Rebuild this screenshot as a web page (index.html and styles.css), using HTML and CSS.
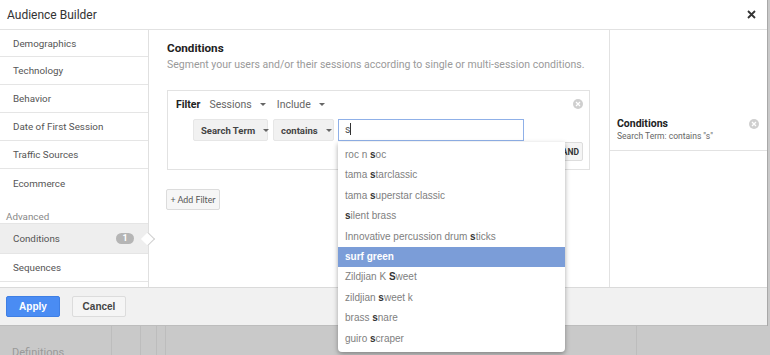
FILE: index.html
```html
<!DOCTYPE html>
<html>
<head>
<meta charset="utf-8">
<title>Audience Builder</title>
<link rel="stylesheet" href="styles.css">
</head>
<body>
<div class="modal">
  <div class="header">
    <span class="title">Audience Builder</span>
    <svg class="close" width="9" height="9" viewBox="0 0 9 9"><path d="M1 1L8 8M8 1L1 8" stroke="#333" stroke-width="1.8"/></svg>
  </div>
  <div class="body">
    <nav class="sidebar">
      <div class="item first">Demographics</div>
      <div class="item">Technology</div>
      <div class="item">Behavior</div>
      <div class="item">Date of First Session</div>
      <div class="item">Traffic Sources</div>
      <div class="item plain">Ecommerce</div>
      <div class="section">Advanced</div>
      <div class="item active">Conditions <span class="badge">1</span></div>
      <div class="item">Sequences</div>
    </nav>
    <main class="main">
      <h2 class="heading">Conditions</h2>
      <p class="sub">Segment your users and/or their sessions according to single or multi-session conditions.</p>
      <div class="filter">
        <div class="filter-top">
          <span class="filter-label">Filter</span>
          <span class="drop d-sessions">Sessions <span class="caret"></span></span>
          <span class="drop">Include <span class="caret"></span></span>
          <span class="spacer"></span>
          <span class="remove"><svg width="6" height="6" viewBox="0 0 6 6"><path d="M1 1L5 5M5 1L1 5" stroke="#fff" stroke-width="1.3"/></svg></span>
        </div>
        <div class="filter-row">
          <span class="sel w-term">Search Term <span class="caret"></span></span>
          <span class="sel w-contains">contains <span class="caret"></span></span>
          <div class="input-wrap">
            <div class="input">s<span class="cursor"></span></div>
            <ul class="dropdown">
              <li>roc n <b>s</b>oc</li>
              <li>tama <b>s</b>tarclassic</li>
              <li>tama <b>s</b>uperstar classic</li>
              <li><b>s</b>ilent brass</li>
              <li>Innovative percussion drum <b>s</b>ticks</li>
              <li class="hl"><b>s</b>urf green</li>
              <li>Zildjian K <b>S</b>weet</li>
              <li>zildjian <b>s</b>weet k</li>
              <li>brass <b>s</b>nare</li>
              <li>guiro <b>s</b>craper</li>
            </ul>
          </div>
        </div>
        <div class="and-row"><span class="and">AND</span></div>
      </div>
      <span class="add">+ Add Filter</span>
    </main>
    <aside class="summary">
      <div class="sum-item">
        <div class="sum-text">
          <div class="sum-title">Conditions</div>
          <div class="sum-desc">Search Term: contains "s"</div>
        </div>
        <span class="remove"><svg width="6" height="6" viewBox="0 0 6 6"><path d="M1 1L5 5M5 1L1 5" stroke="#fff" stroke-width="1.3"/></svg></span>
      </div>
    </aside>
  </div>
  <div class="footer">
    <span class="btn apply">Apply</span>
    <span class="btn cancel">Cancel</span>
  </div>
</div>
<div class="behind">
  <div class="b-tab"><span class="b-label">Definitions</span></div>
  <div class="b-col c1"></div>
  <div class="b-col c2"></div>
  <div class="b-col c3"></div>
  <div class="b-col c4"></div>
</div>
</body>
</html>
```
FILE: styles.css
```css
* { box-sizing: border-box; }
body {
  margin: 0;
  width: 770px;
  height: 355px;
  overflow: hidden;
  background: #c9c9c9;
  font-family: Roboto, "Liberation Sans", sans-serif;
}
.modal {
  width: 768px;
  background: #fff;
  border-right: 1px solid #a8a8a8;
  position: relative;
}
.header {
  height: 30px;
  border-bottom: 1px solid #e2e2e2;
  display: flex;
  align-items: center;
  justify-content: space-between;
  padding: 0 11px 0 7px;
}
.title { font-size: 12px; color: #333; }
.body { display: flex; height: 257px; }

.sidebar {
  width: 149px;
  border-right: 1px solid #e0e0e0;
  display: flex;
  flex-direction: column;
}
.item {
  height: 28px;
  flex: none;
  border-bottom: 1px solid #e5e5e5;
  padding-left: 13px;
  padding-right: 14px;
  display: flex;
  align-items: center;
  font-size: 9.8px;
  color: #555;
  position: relative;
}
.item.first { height: 27px; }
.item.plain { border-bottom: none; }
.section {
  height: 27px;
  flex: none;
  padding-left: 6px;
  display: flex;
  align-items: flex-end;
  padding-bottom: 1px;
  font-size: 9.8px;
  color: #888;
  border-bottom: 1px solid #e5e5e5;
}
.item.active {
  background: #eeeeee;
  justify-content: space-between;
  height: 30px;
}
.item.active::after {
  content: "";
  position: absolute;
  right: -5px;
  top: 10px;
  width: 9px;
  height: 9px;
  background: #fff;
  border-top: 1px solid #d0d0d0;
  border-right: 1px solid #d0d0d0;
  transform: rotate(45deg);
}
.badge {
  background: #b5b5b5;
  color: #fff;
  font-size: 9px;
  font-weight: bold;
  border-radius: 6px;
  width: 18px;
  height: 11px;
  line-height: 11px;
  text-align: center;
}

.main {
  width: 460px;
  padding: 11px 19px 0 18px;
}
.heading {
  margin: 0;
  font-size: 11.7px;
  line-height: 15px;
  font-weight: bold;
  color: #222;
}
.sub {
  margin: 1px 0 0;
  font-size: 10.5px;
  line-height: 16px;
  color: #9a9a9a;
  white-space: nowrap;
}
.filter {
  margin-top: 17px;
  border: 1px solid #e2e2e2;
  height: 80px;
  padding: 5px 6px 0 8px;
}
.filter-top {
  display: flex;
  align-items: center;
  height: 16px;
  font-size: 10.5px;
}
.filter-label { font-weight: bold; color: #222; margin-right: 9px; }
.drop { color: #666; display: flex; align-items: center; }
.d-sessions { margin-right: 11px; }
.caret {
  display: inline-block;
  width: 0;
  height: 0;
  border-left: 3px solid transparent;
  border-right: 3px solid transparent;
  border-top: 3px solid #666;
  margin-left: 8px;
}
.spacer { flex: 1; }
.remove {
  width: 10px;
  height: 10px;
  border-radius: 50%;
  background: #cfcfcf;
  display: flex;
  align-items: center;
  justify-content: center;
}
.filter-row {
  display: flex;
  margin: 7px 0 0 17px;
  height: 22px;
}
.sel {
  background: #f1f1f1;
  border: 1px solid #e6e6e6;
  border-radius: 2px;
  font-size: 9.5px;
  font-weight: bold;
  color: #444;
  white-space: nowrap;
  display: flex;
  align-items: center;
  justify-content: space-between;
  padding: 0 8px 0 7px;
  margin-right: 5px;
}
.w-term { width: 75px; }
.w-contains { width: 61px; margin-right: 4px; }
.input-wrap { position: relative; width: 186px; }
.input {
  height: 22px;
  border: 1px solid #8fb0e8;
  font-size: 10.5px;
  color: #555;
  padding: 3px 6px;
  line-height: 14px;
}
.cursor {
  display: inline-block;
  width: 1px;
  height: 12px;
  background: #333;
  vertical-align: -2px;
}
.dropdown {
  position: absolute;
  z-index: 10;
  left: 0;
  top: 23px;
  width: 227px;
  margin: 0;
  padding: 3px 0 3px;
  list-style: none;
  background: #fff;
  border-radius: 0 0 4px 4px;
  box-shadow: 0 2px 5px rgba(0,0,0,0.35);
  font-family: "Liberation Sans", Arial, sans-serif;
  font-size: 10px;
  color: #808080;
}
.dropdown li {
  height: 20.4px;
  line-height: 20.4px;
  padding-left: 7px;
}
.dropdown b { color: #333; }
.dropdown li.hl { background: #7b9dd8; color: #fff; font-weight: bold; }
.dropdown li.hl b { color: #fff; }
.and-row { display: flex; justify-content: flex-end; margin-top: 1px; }
.and {
  height: 19px;
  padding: 0 3px 0 8px;
  border: 1px solid #ddd;
  border-radius: 2px;
  background: #f5f5f5;
  font-size: 8.5px;
  font-weight: bold;
  color: #333;
  display: flex;
  align-items: center;
}
.add {
  display: inline-flex;
  align-items: center;
  justify-content: center;
  margin: 19px 0 0 -1px;
  width: 54px;
  height: 21px;
  border: 1px solid #dcdcdc;
  border-radius: 2px;
  background: #f6f6f6;
  font-family: Lato, sans-serif;
  font-size: 8.8px;
  color: #555;
}

.summary {
  width: 158px;
  border-left: 1px solid #e2e2e2;
  padding-top: 84px;
}
.sum-item {
  display: flex;
  justify-content: space-between;
  align-items: flex-start;
  padding: 3px 8px 7px 7px;
  border-bottom: 1px solid #e2e2e2;
}
.sum-title { font-size: 10.5px; font-weight: bold; color: #222; line-height: 13px; }
.sum-desc { font-size: 8.5px; color: #666; line-height: 13px; }
.sum-item .remove { margin-top: 2px; }

.footer {
  height: 39px;
  border-top: 1px solid #dadada;
  background: #f1f1f1;
  display: flex;
  align-items: center;
  padding: 0 0 0 6px;
  gap: 12px;
  border-bottom: 1px solid #bdbdbd;
}
.btn {
  width: 54px;
  height: 21px;
  border-radius: 2px;
  display: flex;
  align-items: center;
  justify-content: center;
  font-family: "Liberation Sans", Arial, sans-serif;
  font-size: 10px;
  font-weight: bold;
}
.apply { background: #4a8cf3; color: #fff; border: 1px solid #3f7fe4; }
.cancel { background: #f5f5f5; color: #444; border: 1px solid #dcdcdc; }

.behind {
  display: flex;
  height: 29px;
  overflow: hidden;
}
.b-tab {
  width: 112px;
  border-right: 1px solid #bdbdbd;
  font-size: 11px;
  line-height: 14px;
  color: #999;
  padding: 20px 0 0 12px;
  overflow: hidden;
}
.b-col { border-right: 1px solid #bdbdbd; }
.c1 { width: 29px; }
.c2 { width: 16px; }
.c3 { width: 9px; }
.c4 { width: 471px; }
```
